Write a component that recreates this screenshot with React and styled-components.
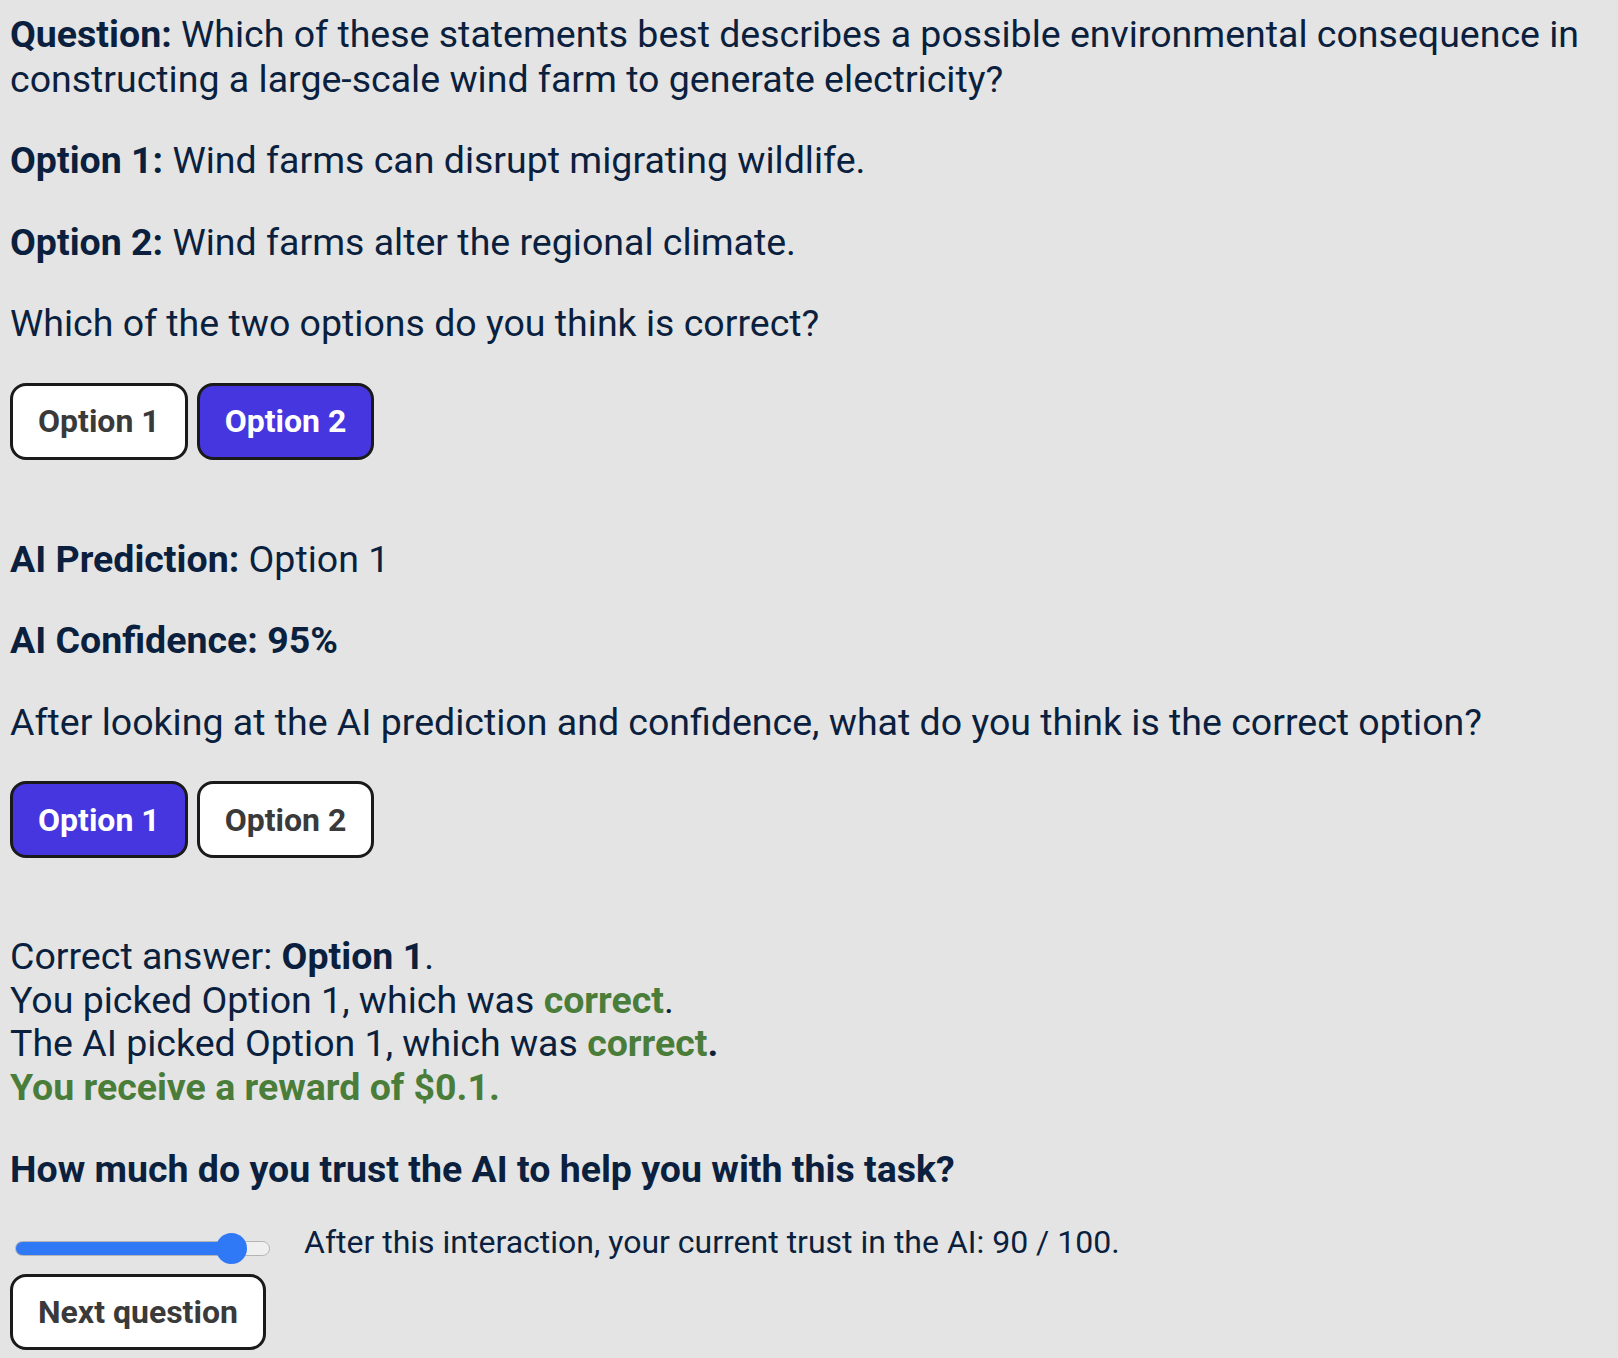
import React, { useState } from "react";
import styled, { createGlobalStyle } from "styled-components";

const GlobalStyle = createGlobalStyle`
  html, body {
    margin: 0;
    padding: 0;
    background: #e4e4e4;
  }
  body {
    font-family: Roboto, "Liberation Sans", Arial, sans-serif;
    color: #0b1f3e;
  }
`;

const Page = styled.main`
  display: flex;
  flex-direction: column;
  align-items: flex-start;
  padding: 12px 10px 0 10px;
  min-height: 1346px;
  background: #e4e4e4;
`;

const Para = styled.p`
  margin: ${(p) => p.$mt ?? 37}px 0 0 0;
  font-size: 37.5px;
  line-height: 44.5px;
  font-weight: ${(p) => (p.$bold ? 700 : 400)};
  color: #0b1f3e;
`;

const Strong = styled.strong`
  font-weight: 700;
`;

const Good = styled.span`
  font-weight: 700;
  color: #4a7d39;
`;

const ButtonRow = styled.div`
  display: flex;
  gap: 9px;
  margin-top: 37px;
  margin-bottom: 77px;
`;

const ChoiceButton = styled.button`
  box-sizing: border-box;
  height: 77px;
  padding: 0 25px;
  border: 3px solid #1a1a1a;
  border-radius: 16px;
  background: ${(p) => (p.$selected ? "#4636df" : "#ffffff")};
  color: ${(p) => (p.$selected ? "#ffffff" : "#3a3a3a")};
  font-family: Roboto, "Liberation Sans", Arial, sans-serif;
  font-size: 32px;
  font-weight: 700;
  cursor: pointer;
`;

const Result = styled.div`
  font-size: 37.5px;
  line-height: 43.7px;
`;

const Line = styled.div`
  color: ${(p) => (p.$good ? "#4a7d39" : "#0b1f3e")};
  font-weight: ${(p) => (p.$good ? 700 : 400)};
`;

const SliderRow = styled.div`
  display: flex;
  align-items: flex-end;
  gap: 34px;
  margin-top: 32px;
`;

const Slider = styled.input`
  -webkit-appearance: none;
  appearance: none;
  width: 255px;
  height: 31px;
  margin: 0 0 0 5px;
  background: transparent;
  --fill: calc(15px + ${(p) => p.$value / 100} * (100% - 31px));

  &::-webkit-slider-runnable-track {
    height: 15px;
    box-sizing: border-box;
    border-radius: 8px;
    border: 1.5px solid #b4b4b4;
    background: linear-gradient(
      to right,
      #2f78f6 0,
      #2f78f6 var(--fill),
      #efefef var(--fill),
      #efefef 100%
    );
  }
  &::-webkit-slider-thumb {
    -webkit-appearance: none;
    appearance: none;
    width: 31px;
    height: 31px;
    margin-top: -9.5px;
    border: none;
    border-radius: 50%;
    background: #2f78f6;
  }
`;

const SliderText = styled.span`
  font-size: 32px;
  line-height: 39px;
  padding-bottom: 2px;
  color: #0b1f3e;
`;

const NextButton = styled(ChoiceButton)`
  margin-top: 10px;
  height: 76px;
`;

export default function App() {
  const [first, setFirst] = useState(2);
  const [second, setSecond] = useState(1);
  const [trust, setTrust] = useState(90);

  return (
    <>
      <GlobalStyle />
      <Page>
        <Para $mt={0}>
          <Strong>Question:</Strong> Which of these statements best describes a
          possible environmental consequence in constructing a large-scale wind
          farm to generate electricity?
        </Para>
        <Para>
          <Strong>Option 1:</Strong> Wind farms can disrupt migrating wildlife.
        </Para>
        <Para>
          <Strong>Option 2:</Strong> Wind farms alter the regional climate.
        </Para>
        <Para>Which of the two options do you think is correct?</Para>
        <ButtonRow>
          <ChoiceButton $selected={first === 1} onClick={() => setFirst(1)}>
            Option 1
          </ChoiceButton>
          <ChoiceButton $selected={first === 2} onClick={() => setFirst(2)}>
            Option 2
          </ChoiceButton>
        </ButtonRow>

        <Para $mt={0}>
          <Strong>AI Prediction:</Strong> Option 1
        </Para>
        <Para $bold>AI Confidence: 95%</Para>
        <Para>
          After looking at the AI prediction and confidence, what do you think is
          the correct option?
        </Para>
        <ButtonRow>
          <ChoiceButton $selected={second === 1} onClick={() => setSecond(1)}>
            Option 1
          </ChoiceButton>
          <ChoiceButton $selected={second === 2} onClick={() => setSecond(2)}>
            Option 2
          </ChoiceButton>
        </ButtonRow>

        <Result>
          <Line>
            Correct answer: <Strong>Option 1</Strong>.
          </Line>
          <Line>
            You picked Option 1, which was <Good>correct</Good>.
          </Line>
          <Line>
            The AI picked Option 1, which was <Good>correct</Good>
            <Strong>.</Strong>
          </Line>
          <Line $good>You receive a reward of $0.1.</Line>
        </Result>

        <Para $bold>How much do you trust the AI to help you with this task?</Para>

        <SliderRow>
          <Slider
            type="range"
            min={0}
            max={100}
            value={trust}
            $value={trust}
            onChange={(e) => setTrust(Number(e.target.value))}
          />
          <SliderText>
            After this interaction, your current trust in the AI: {trust} / 100.
          </SliderText>
        </SliderRow>

        <NextButton>Next question</NextButton>
      </Page>
    </>
  );
}
